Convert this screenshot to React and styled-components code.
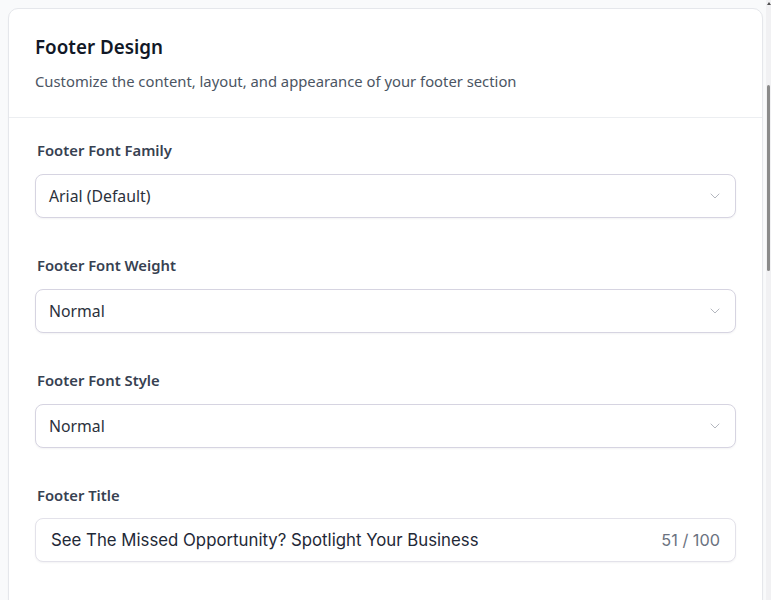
import React from 'react';
import styled, { createGlobalStyle } from 'styled-components';
import { ChevronDown } from 'lucide-react';

const GlobalStyle = createGlobalStyle`
  html, body {
    margin: 0;
    background: #f9fafb;
  }
  body {
    padding: 8px;
    font-family: "Noto Sans", "Open Sans", sans-serif;
    overflow: hidden;
  }
`;

const Card = styled.section`
  background: #ffffff;
  border: 1px solid #e5e7eb;
  border-radius: 10px;
  min-height: 620px;
  box-shadow: 0 1px 2px rgba(0, 0, 0, 0.03);
`;

const CardHeader = styled.header`
  padding: 24px 26px 26px;
  border-bottom: 1px solid #eceef1;
`;

const Title = styled.h2`
  margin: 0;
  font-size: 18.8px;
  line-height: 28px;
  font-weight: 600;
  color: #111827;
`;

const Subtitle = styled.p`
  margin: 10px 0 0;
  font-size: 14.8px;
  line-height: 20px;
  color: #4b5563;
`;

const CardBody = styled.div`
  display: flex;
  flex-direction: column;
  gap: 37px;
  padding: 22px 26px 24px;
`;

const Field = styled.div`
  display: flex;
  flex-direction: column;
  gap: ${p => p.$gap || 14}px;
`;

const Label = styled.label`
  padding-left: 2px;
  font-size: 14.8px;
  line-height: 20px;
  font-weight: 600;
  color: #374151;
`;

const Box = styled.div`
  display: flex;
  align-items: center;
  justify-content: space-between;
  height: 44px;
  box-sizing: border-box;
  padding: 0 12px 0 13px;
  border: 1px solid ${p => (p.$soft ? '#e3e2ea' : '#d6d4e1')};
  border-radius: 8px;
  background: #ffffff;
  box-shadow: 0 1px 2px rgba(16, 24, 40, 0.05);
`;

const SelectValue = styled.span`
  font-size: 15.8px;
  color: #2b313c;
`;

const Chevron = styled(ChevronDown)`
  color: #b4b7bf;
`;

const InputText = styled.span`
  padding-left: 2px;
  font-family: Inter, "Noto Sans", sans-serif;
  font-size: 16.8px;
  color: #1f2937;
`;

const Counter = styled.span`
  font-family: Inter, "Noto Sans", sans-serif;
  font-size: 16.3px;
  color: #6b7280;
  margin-right: 3px;
`;

const ScrollTrack = styled.div`
  position: fixed;
  top: 0;
  right: 0;
  width: 5px;
  height: 100vh;
  background: #f1f1f3;
`;

const ScrollArrow = styled.div`
  margin: 2px 0 0 1px;
  width: 0;
  height: 0;
  border-left: 2px solid transparent;
  border-right: 2px solid transparent;
  border-bottom: 3px solid #505050;
`;

const ScrollThumb = styled.div`
  margin: 80px 0 0 1px;
  width: 3px;
  height: 186px;
  background: #8a8a8a;
  border-radius: 2px;
`;

const selects = [
  { label: 'Footer Font Family', value: 'Arial (Default)' },
  { label: 'Footer Font Weight', value: 'Normal' },
  { label: 'Footer Font Style', value: 'Normal' },
];

const footerTitle = 'See The Missed Opportunity? Spotlight Your Business';

const App = () => {
  return (
    <>
      <GlobalStyle />
      <Card>
        <CardHeader>
          <Title>Footer Design</Title>
          <Subtitle>Customize the content, layout, and appearance of your footer section</Subtitle>
        </CardHeader>
        <CardBody>
          {selects.map(s => (
            <Field key={s.label}>
              <Label>{s.label}</Label>
              <Box>
                <SelectValue>{s.value}</SelectValue>
                <Chevron size={16} strokeWidth={1.5} />
              </Box>
            </Field>
          ))}
          <Field $gap={13}>
            <Label>Footer Title</Label>
            <Box $soft>
              <InputText>{footerTitle}</InputText>
              <Counter>{footerTitle.length} / 100</Counter>
            </Box>
          </Field>
        </CardBody>
      </Card>
      <ScrollTrack>
        <ScrollArrow />
        <ScrollThumb />
      </ScrollTrack>
    </>
  );
};

export default App;
